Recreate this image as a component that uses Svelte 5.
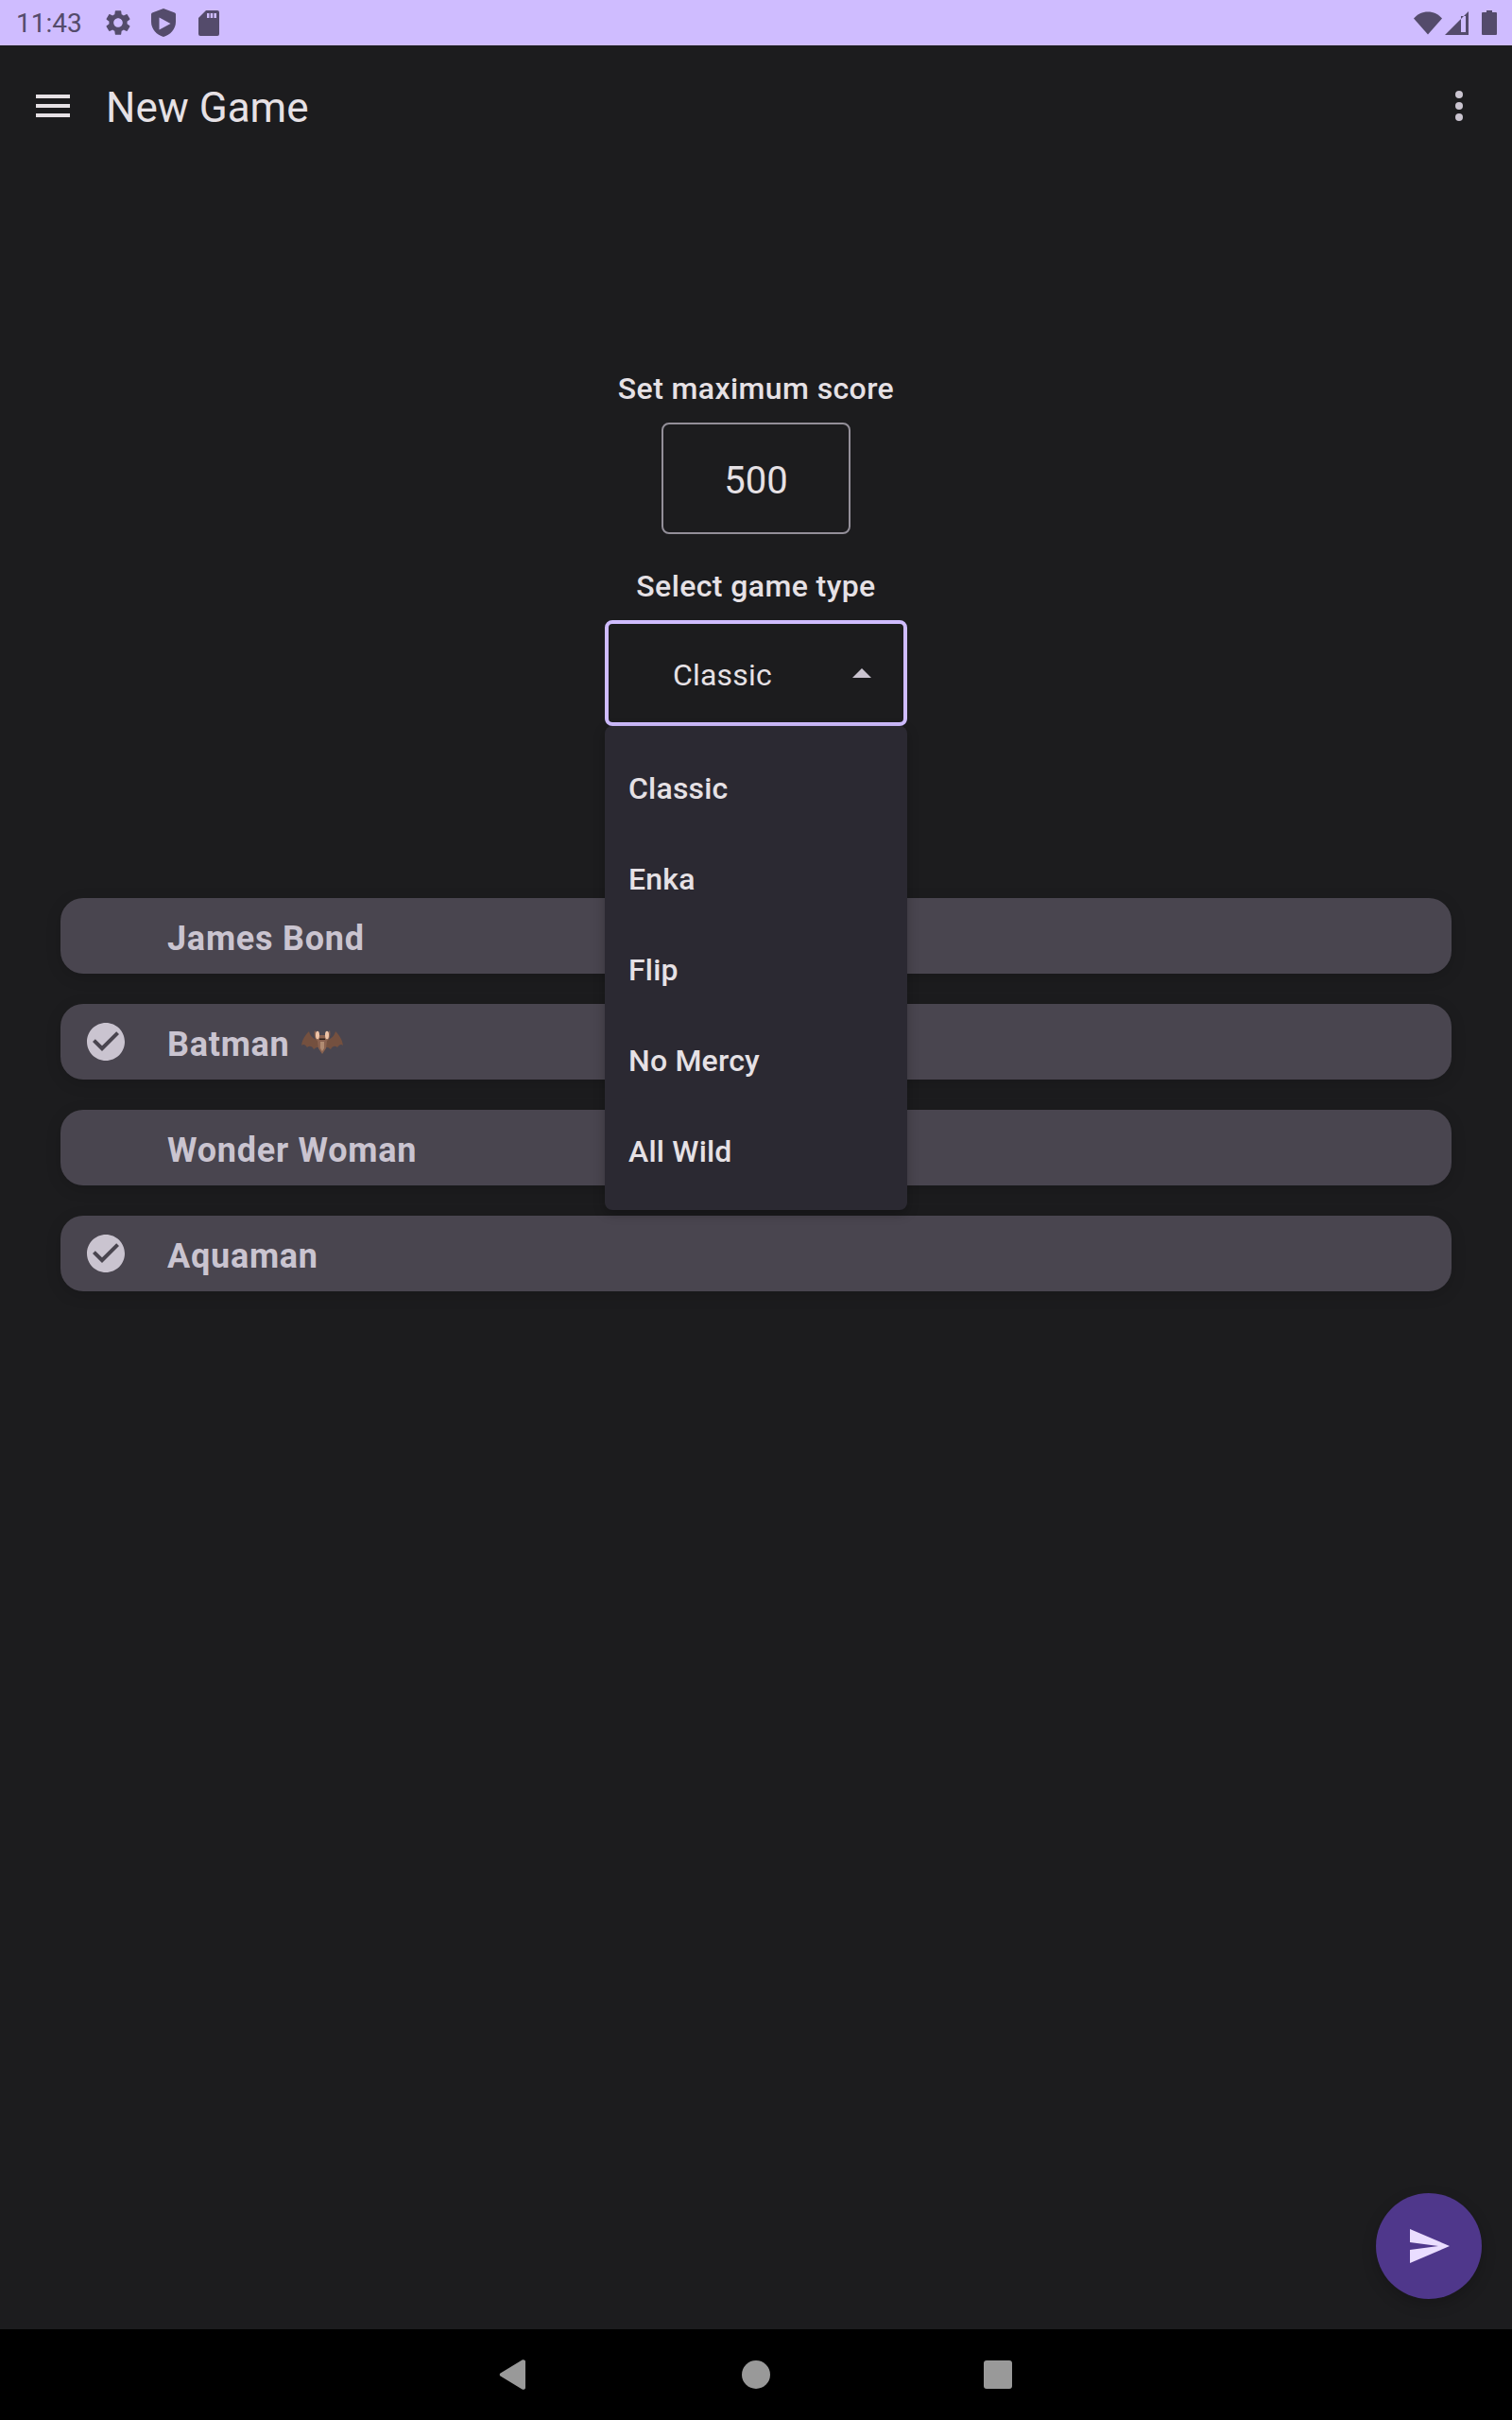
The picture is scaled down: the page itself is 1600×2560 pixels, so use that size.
<script>
    const players = [
        { name: "James Bond", checked: false },
        { name: "Batman", checked: true, bat: true },
        { name: "Wonder Woman", checked: false },
        { name: "Aquaman", checked: true },
    ];
    const gameTypes = ["Classic", "Enka", "Flip", "No Mercy", "All Wild"];
    let maxScore = $state("500");
</script>

<div class="screen">
    <header class="status">
        <span class="time">11:43</span>
        <svg class="st gear" viewBox="0 0 24 24"><path d="M19.14 12.94c.04-.3.06-.61.06-.94 0-.32-.02-.64-.07-.94l2.03-1.58a.49.49 0 0 0 .12-.61l-1.92-3.32a.488.488 0 0 0-.59-.22l-2.39.96c-.5-.38-1.03-.7-1.62-.94l-.36-2.54a.484.484 0 0 0-.48-.41h-3.84c-.24 0-.43.17-.47.41l-.36 2.54c-.59.24-1.13.57-1.62.94l-2.39-.96c-.22-.08-.47 0-.59.22L2.74 8.87c-.12.21-.08.47.12.61l2.03 1.58c-.05.3-.09.63-.09.94s.02.64.07.94l-2.03 1.58a.49.49 0 0 0-.12.61l1.92 3.32c.12.22.37.29.59.22l2.39-.96c.5.38 1.03.7 1.62.94l.36 2.54c.05.24.24.41.48.41h3.84c.24 0 .44-.17.47-.41l.36-2.54c.59-.24 1.13-.56 1.62-.94l2.39.96c.22.08.47 0 .59-.22l1.92-3.32c.12-.22.07-.47-.12-.61l-2.01-1.58zM12 15.6c-1.98 0-3.6-1.62-3.6-3.6s1.62-3.6 3.6-3.6 3.6 1.62 3.6 3.6-1.62 3.6-3.6 3.6z"/></svg>
        <svg class="st shield" viewBox="0 0 26 30"><path fill-rule="evenodd" d="M13 0 L25 4.5 Q26 5 26 6 V14 C26 22 20 28 13 30 C6 28 0 22 0 14 V6 Q0 5 1 4.5 Z M8.5 9.5 V22.5 L20.5 16 Z"/></svg>
        <svg class="st sd" viewBox="0 0 22 27"><path fill-rule="evenodd" d="M8 0 H20 a2 2 0 0 1 2 2 V25 a2 2 0 0 1-2 2 H2 a2 2 0 0 1-2-2 V8 Z M9 3 V8 H11.5 V3 Z M12.7 3 V8 H15.2 V3 Z M16.4 3 V8 H19 V3 Z"/></svg>
        <span class="spacer"></span>
        <svg class="st wifi" viewBox="0 0 30 25"><path d="M15 24.5 L0 7.5 C4 3 9 .5 15 .5 S26 3 30 7.5 Z"/></svg>
        <svg class="st signal" viewBox="0 0 25 25"><path fill-rule="evenodd" d="M0 25 L25 0 V25 Z M17 5 V22 H22 V5 Z"/></svg>
        <svg class="st battery" viewBox="0 0 16 26"><path d="M5 0 H11 V2 H15 a1 1 0 0 1 1 1 V25 a1 1 0 0 1-1 1 H1 a1 1 0 0 1-1-1 V3 a1 1 0 0 1 1-1 H5 Z"/></svg>
    </header>

    <nav class="toolbar">
        <div class="burger"><i></i><i></i><i></i></div>
        <h1>New Game</h1>
        <div class="dots"><i></i><i></i><i></i></div>
    </nav>

    <main>
        <label class="caption" for="score">Set maximum score</label>
        <input id="score" class="score" bind:value={maxScore} />

        <p class="caption second">Select game type</p>
        <div class="select">
            <div class="field">
                <span>Classic</span>
                <b class="arrow"></b>
            </div>
            <ul class="menu">
                {#each gameTypes as type}
                    <li>{type}</li>
                {/each}
            </ul>
        </div>

        <div class="players">
            {#each players as p}
                <div class="player">
                    <span class="mark">
                        {#if p.checked}
                            <svg viewBox="0 0 24 24"><path fill-rule="evenodd" d="M12 2C6.48 2 2 6.48 2 12s4.48 10 10 10 10-4.48 10-10S17.52 2 12 2zm-2 15l-5-5 1.41-1.41L10 14.17l7.59-7.59L19 8l-9 9z"/></svg>
                        {/if}
                    </span>
                    <span class="name">{p.name}</span>
                    {#if p.bat}
                        <svg class="bat" viewBox="0 0 44 26">
                            <!-- wings -->
                            <path fill="#74503f" d="M0 17 C1 10 4 6 8 2 C9 6 11 9 16 11 H28 C33 9 35 6 36 2 C40 6 43 10 44 17 C42 15 40 16 38 19 C36 17 33 17 31 21 L28 19 H16 L13 21 C11 17 8 17 6 19 C4 16 2 15 0 17 Z"/>
                            <!-- head and body -->
                            <path fill="#8a6250" d="M14 1 L18 6 H26 L30 1 C31 6 30 10 27 12 L26 20 L22 26 L18 20 L17 12 C14 10 13 6 14 1 Z"/>
                            <ellipse cx="17" cy="6" rx="2" ry="4.2" fill="#eec4a8"/>
                            <ellipse cx="27" cy="6" rx="2" ry="4.2" fill="#eec4a8"/>
                            <path fill="#b18b72" d="M20 13 H24 V20 L22 23 L20 20 Z"/>
                            <path fill="#2f201a" d="M19 9.5 H25 V11 H19 Z"/>
                        </svg>
                    {/if}
                </div>
            {/each}
        </div>

        <button class="fab" aria-label="Start game">
            <svg viewBox="0 0 24 24"><path d="M2.01 21L23 12 2.01 3 2 10l15 2-15 2z"/></svg>
        </button>
    </main>

    <footer class="navbar">
        <svg class="back" viewBox="0 0 28 32"><path d="M1.5 14.5 L24.5.5 C26 -.3 28 .5 28 2 V30 C28 31.5 26 32.3 24.5 31.5 L1.5 17.5 C.5 17 .5 15 1.5 14.5 Z"/></svg>
        <span class="home"></span>
        <span class="recent"></span>
    </footer>
</div>

<style>
    :global(body) {
        background: #1c1c1e;
        font-family: Roboto, sans-serif;
    }
    .screen {
        width: 1600px;
        height: 2560px;
        display: flex;
        flex-direction: column;
        background: #1c1c1e;
        color: #e6e1e5;
    }
    .status {
        height: 48px;
        flex: none;
        background: #cfbcff;
        display: flex;
        align-items: center;
        padding-left: 17px;
        color: #544b6b;
        fill: #544b6b;
    }
    .time {
        font-size: 28px;
        width: 92px;
    }
    .st {
        display: block;
    }
    .gear {
        width: 32px;
        height: 32px;
    }
    .shield {
        width: 26px;
        height: 30px;
        margin-left: 19px;
    }
    .sd {
        width: 22px;
        height: 27px;
        margin-left: 24px;
    }
    .spacer {
        flex: 1;
    }
    .wifi {
        width: 30px;
        height: 25px;
    }
    .signal {
        width: 25px;
        height: 25px;
        margin-left: 3px;
    }
    .battery {
        width: 16px;
        height: 26px;
        margin-left: 14px;
        margin-right: 16px;
    }
    .toolbar {
        height: 128px;
        flex: none;
        display: flex;
        align-items: center;
        padding-left: 38px;
    }
    .burger {
        width: 36px;
        display: flex;
        flex-direction: column;
        gap: 6px;
    }
    .burger i {
        height: 4px;
        background: #e6e1e5;
    }
    h1 {
        margin: 0 0 0 38px;
        padding-top: 4px;
        font-size: 44px;
        font-weight: 400;
        flex: 1;
    }
    .dots {
        display: flex;
        flex-direction: column;
        gap: 4px;
        margin-right: 52px;
    }
    .dots i {
        width: 8px;
        height: 8px;
        border-radius: 50%;
        background: #cac4d0;
    }
    main {
        flex: 1;
        position: relative;
        display: flex;
        flex-direction: column;
        align-items: center;
        padding-top: 216px;
    }
    .caption {
        display: block;
        margin: 0;
        font-size: 32px;
        line-height: 38px;
        font-weight: 500;
        letter-spacing: 0.4px;
    }
    .score {
        box-sizing: border-box;
        width: 200px;
        height: 118px;
        margin-top: 17px;
        padding: 4px 0 0;
        border: 2px solid #938f99;
        border-radius: 8px;
        background: transparent;
        color: #e6e1e5;
        font-family: inherit;
        font-size: 40px;
        text-align: center;
        outline: none;
    }
    .second {
        margin-top: 36px;
    }
    .select {
        position: relative;
        width: 320px;
        margin-top: 17px;
    }
    .field {
        box-sizing: border-box;
        height: 112px;
        border: 4px solid #cfbcff;
        border-radius: 8px;
        display: flex;
        align-items: center;
        padding-left: 68px;
        font-size: 32px;
        letter-spacing: 0.2px;
    }
    .field span {
        flex: 1;
        padding-top: 3px;
    }
    .arrow {
        width: 0;
        height: 0;
        margin-right: 34px;
        border-left: 10px solid transparent;
        border-right: 10px solid transparent;
        border-bottom: 10px solid #cac4d0;
    }
    .menu {
        position: absolute;
        top: 112px;
        left: 0;
        z-index: 2;
        box-sizing: border-box;
        width: 320px;
        margin: 0;
        padding: 16px 0;
        list-style: none;
        background: #2b2932;
        border-radius: 8px;
        box-shadow: 0 4px 12px rgba(0, 0, 0, 0.25);
    }
    .menu li {
        box-sizing: border-box;
        height: 96px;
        display: flex;
        align-items: center;
        padding: 3px 0 0 25px;
        font-size: 32px;
        font-weight: 500;
        letter-spacing: 0.2px;
    }
    .players {
        align-self: stretch;
        margin-top: 182px;
        padding: 0 64px;
        display: flex;
        flex-direction: column;
        gap: 32px;
    }
    .player {
        height: 80px;
        display: flex;
        align-items: center;
        background: #49454f;
        border-radius: 24px;
        box-shadow: 0 4px 16px rgba(0, 0, 0, 0.15);
        color: #cac4d0;
        font-size: 36px;
        font-weight: 700;
        letter-spacing: 0.75px;
    }
    .name {
        padding-top: 5px;
    }
    .mark {
        width: 113px;
        flex: none;
        display: flex;
        padding-left: 24px;
        box-sizing: border-box;
    }
    .mark svg {
        width: 48px;
        height: 48px;
        fill: #cac4d0;
    }
    .bat {
        width: 44px;
        height: 26px;
        margin-left: 12px;
    }
    .fab {
        position: absolute;
        right: 32px;
        bottom: 32px;
        width: 112px;
        height: 112px;
        padding: 32px;
        border: none;
        border-radius: 50%;
        background: #4f378b;
        box-shadow: 0 6px 16px rgba(0, 0, 0, 0.2);
    }
    .fab svg {
        display: block;
        width: 48px;
        height: 48px;
        fill: #eaddff;
    }
    .navbar {
        position: relative;
        height: 96px;
        flex: none;
        background: #000;
    }
    .back, .home, .recent {
        position: absolute;
        display: block;
    }
    .back {
        left: 528px;
        top: 32px;
        width: 28px;
        height: 32px;
        fill: #999;
    }
    .home {
        left: 785px;
        top: 33px;
        width: 30px;
        height: 30px;
        border-radius: 50%;
        background: #999;
    }
    .recent {
        left: 1041px;
        top: 33px;
        width: 30px;
        height: 30px;
        border-radius: 3px;
        background: #999;
    }
</style>
